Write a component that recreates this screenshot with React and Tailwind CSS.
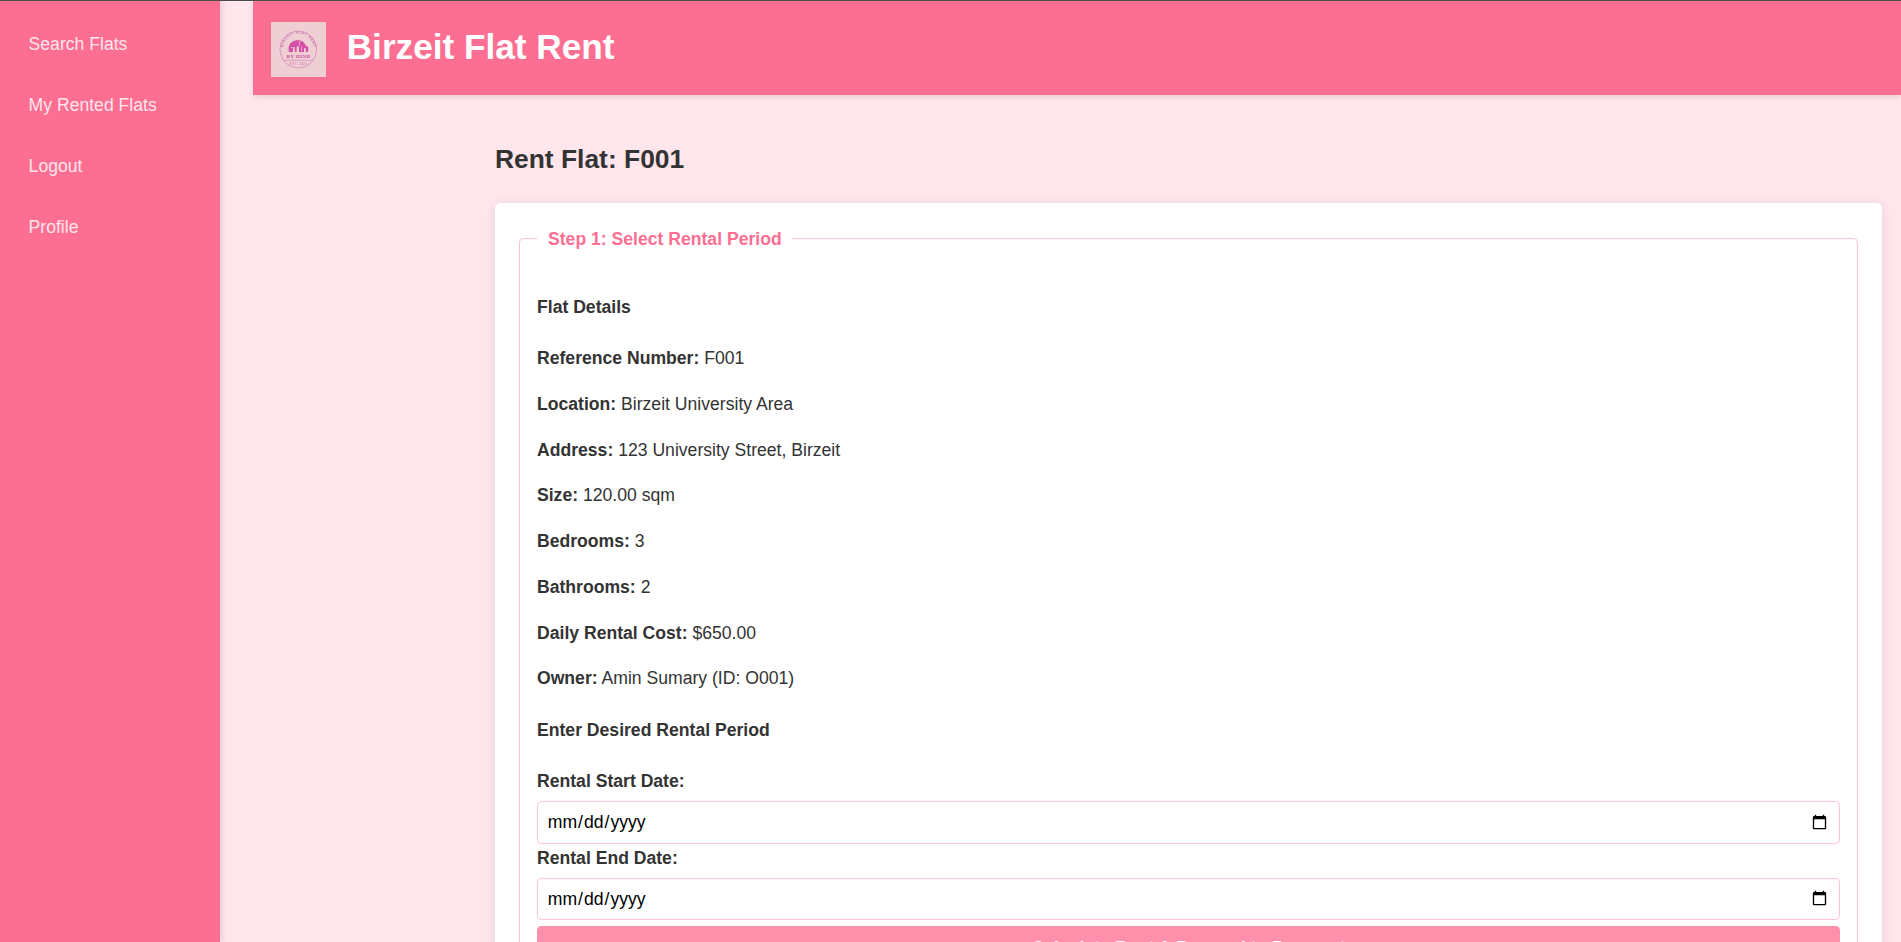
const NAV = ["Search Flats", "My Rented Flats", "Logout", "Profile"];

const DETAILS = [
  ["Reference Number:", "F001"],
  ["Location:", "Birzeit University Area"],
  ["Address:", "123 University Street, Birzeit"],
  ["Size:", "120.00 sqm"],
  ["Bedrooms:", "3"],
  ["Bathrooms:", "2"],
  ["Daily Rental Cost:", "$650.00"],
  ["Owner:", "Amin Sumary (ID: O001)"],
];

function Logo() {
  return (
    <svg viewBox="0 0 55 55" className="size-[55px] shrink-0 bg-[#eecfd3]">
      <defs>
        <path id="arc-top" d="M13.1 33 A15.4 15.4 0 1 1 41.5 33" />
      </defs>
      <g fill="none" stroke="#d98fbd">
        <circle cx="27.3" cy="27.5" r="18.3" strokeWidth="0.9" />
        <path d="M16.6 28 A11.2 11.2 0 0 1 38 28" strokeWidth="0.6" />
        <path d="M12 38.3 H42.6" strokeWidth="0.8" />
      </g>
      <text fontSize="3.6" fontWeight="700" fill="#cc6fad" letterSpacing="0.6">
        <textPath href="#arc-top" startOffset="50%" textAnchor="middle">BIRZEIT FLAT RENT</textPath>
      </text>
      <path
        d="M17.8 30 V24.5 C19 21 22 18.3 26.5 18.3 C31.5 18.3 34.2 21 34.8 24.2 H37 V30 H34.8 V26.3 H33 V30 H28 V24.5 H25.6 V30 H23.8 V26.3 H22 V30 Z"
        fill="#d44fa6"
      />
      <path d="M28.4 19 V24 M30.5 24.5 V29 M19.5 25.6 H24" stroke="#eecfd3" strokeWidth="0.7" />
      <text x="27.6" y="36.4" fontSize="4.8" fontWeight="700" fill="#cb3f9b" textAnchor="middle" letterSpacing="0.5" fontFamily="Liberation Serif">
        BY HIND
      </text>
      <text x="27.5" y="43.2" fontSize="3.2" fill="#cf6fae" textAnchor="middle" letterSpacing="0.3">
        EST. 2025
      </text>
    </svg>
  );
}

function DateField({ label, id, size }) {
  return (
    <>
      <label htmlFor={id} className="block font-bold">{label}</label>
      <input
        id={id}
        type="date"
        className={`${size} block w-full rounded-[4.4px] border border-[#ffc2d1] bg-white px-[8.8px] text-[17.6px] text-black`}
      />
    </>
  );
}

export default function App() {
  return (
    <div className="flex h-[942px] overflow-hidden border-t border-[#4b4b4b] bg-[#ffe5ec] font-['Liberation_Sans',Arial,sans-serif] text-[17.6px] leading-[28.16px] text-[#333]">
      <nav className="flex w-[220px] shrink-0 flex-col gap-[33px] bg-[#fd6f92] pt-[29px] pl-[28.6px] text-[#ffe5ec] shadow-[2px_0_6px_rgba(0,0,0,0.1)]">
        {NAV.map((item) => (
          <a key={item} href="#" className="leading-[28px]">{item}</a>
        ))}
      </nav>
      <div className="ml-[33px] flex min-w-0 flex-1 flex-col">
        <header className="flex h-[94px] shrink-0 items-start bg-[#fd6f92] pt-[21px] pl-[18px] shadow-[0_2px_5px_rgba(0,0,0,0.1)]">
          <Logo />
          <h1 className="ml-[20.7px] text-[35.2px] leading-[50px] font-bold text-white">Birzeit Flat Rent</h1>
        </header>
        <main className="mr-[19px] ml-[242px] pt-[43px]">
          <h2 className="text-[26.4px] leading-[42px] font-bold">Rent Flat: F001</h2>
          <form className="mt-[23px] h-[800px] rounded-[5.5px] bg-white px-[24px] pt-[20.7px] shadow-[0_2px_11px_rgba(0,0,0,0.1)]">
            <fieldset className="h-[800px] rounded-[4.4px] border border-[#ffc2d1] px-[17px]">
              <legend className="pt-[1.4px] pr-[10.2px] pl-[11px] font-bold text-[#fd6f92]">Step 1: Select Rental Period</legend>
              <h4 className="mt-[39.3px] mb-[23.4px] font-bold">Flat Details</h4>
              <div className="flex flex-col gap-[17.6px]">
                {DETAILS.map(([name, value]) => (
                  <p key={name}><strong>{name}</strong> {value}</p>
                ))}
              </div>
              <h4 className="my-[23.4px] font-bold">Enter Desired Rental Period</h4>
              <DateField id="start" label="Rental Start Date:" size="mt-[5.5px] h-[42.7px]" />
              <DateField id="end" label="Rental End Date:" size="mt-[6px] h-[42px]" />
              <button type="button" className="mt-[5.7px] block h-[44px] w-full rounded-[4.4px] bg-[#ff8fab] font-bold text-white">
                Calculate Rent &amp; Proceed to Payment
              </button>
            </fieldset>
          </form>
        </main>
      </div>
    </div>
  );
}
